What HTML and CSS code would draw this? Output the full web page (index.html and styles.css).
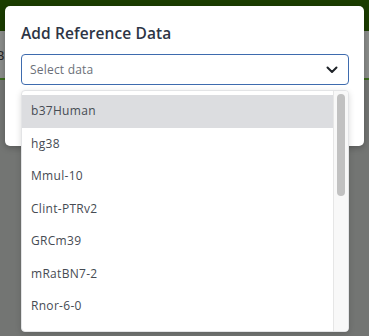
FILE: index.html
```html
<!DOCTYPE html>
<html lang="en">
<head>
    <meta charset="UTF-8">
    <meta name="viewport" content="width=device-width, initial-scale=1.0">
    <title>Add Reference Data</title>
    <link rel="stylesheet" href="styles.css">
</head>
<body>
    <!-- page behind the dialog -->
    <div class="page">
        <div class="topbar"></div>
        <div class="subbar"><span class="subbar-text">B</span></div>
        <div class="page-body"></div>
    </div>

    <div class="modal">
        <h2 class="modal-title">Add Reference Data</h2>
        <div class="select">
            <span class="select-placeholder">Select data</span>
            <svg class="chevron" width="12" height="8" viewBox="0 0 12 8">
                <path d="M1.5 1.5 L6 6 L10.5 1.5" fill="none" stroke="#1f2328" stroke-width="2" stroke-linecap="round" stroke-linejoin="round"/>
            </svg>
        </div>
    </div>

    <div class="dropdown">
        <ul class="options">
            <li class="option active">b37Human</li>
            <li class="option">hg38</li>
            <li class="option">Mmul-10</li>
            <li class="option">Clint-PTRv2</li>
            <li class="option">GRCm39</li>
            <li class="option">mRatBN7-2</li>
            <li class="option">Rnor-6-0</li>
        </ul>
        <div class="scrollbar">
            <div class="thumb"></div>
        </div>
    </div>
</body>
</html>
```

FILE: styles.css
```css
:root {
    --green: #1b3d00;
    --overlay: #737573;
    --title: #2d3545;
    --border-blue: #3e6bae;
    --muted: #6b7079;
    --item-text: #464b53;
    --highlight: #dcdde0;
}

* {
    margin: 0;
    padding: 0;
    box-sizing: border-box;
}

body {
    font-family: 'Open Sans', 'Noto Sans', sans-serif;
    width: 369px;
    height: 336px;
    overflow: hidden;
    background-color: var(--overlay);
    position: relative;
}

.page {
    display: flex;
    flex-direction: column;
    height: 100%;
}

.topbar {
    height: 31px;
    background-color: var(--green);
}

.subbar {
    height: 49px;
    background-color: #8a8c8a;
    border-bottom: 2px solid #3b6a1c;
    display: flex;
    align-items: center;
}

.subbar-text {
    font-size: 13px;
    color: #222;
    margin-left: -4px;
    margin-top: 1px;
}

.page-body {
    flex: 1;
    background-color: var(--overlay);
}

.modal {
    position: absolute;
    left: 5px;
    top: 6px;
    width: 359px;
    height: 140px;
    background-color: white;
    border-radius: 5px;
    box-shadow: 0 2px 6px rgba(0, 0, 0, 0.25);
    padding: 17px 15px 0 16px;
}

.modal-title {
    font-size: 15.5px;
    font-weight: 600;
    color: var(--title);
    line-height: 20px;
    letter-spacing: 0.1px;
}

.select {
    margin-top: 11px;
    height: 31px;
    border: 1px solid var(--border-blue);
    border-radius: 4px;
    display: flex;
    align-items: center;
    justify-content: space-between;
    padding: 0 10px 0 8px;
}

.select-placeholder {
    font-size: 12px;
    color: var(--muted);
    letter-spacing: 0.2px;
}

.chevron {
    margin-top: 1px;
}

.dropdown {
    position: absolute;
    left: 21px;
    top: 90px;
    width: 328px;
    height: 242px;
    background-color: white;
    border: 1px solid #e3e4e6;
    border-radius: 4px;
    box-shadow: 0 2px 6px rgba(0, 0, 0, 0.15);
    display: flex;
    overflow: hidden;
}

.options {
    list-style: none;
    flex: 1;
    padding-top: 4px;
}

.option {
    height: 32.5px;
    display: flex;
    align-items: center;
    padding-left: 9px;
    padding-bottom: 1px;
    font-size: 12px;
    color: var(--item-text);
    letter-spacing: 0.3px;
}

.option.active {
    background-color: var(--highlight);
}

.scrollbar {
    width: 15px;
    background-color: #f8f8f8;
    border-left: 1px solid #e6e6e6;
    padding: 3px 3px 0 3px;
}

.thumb {
    height: 102px;
    background-color: #c1c1c1;
    border-radius: 4px;
}
```
